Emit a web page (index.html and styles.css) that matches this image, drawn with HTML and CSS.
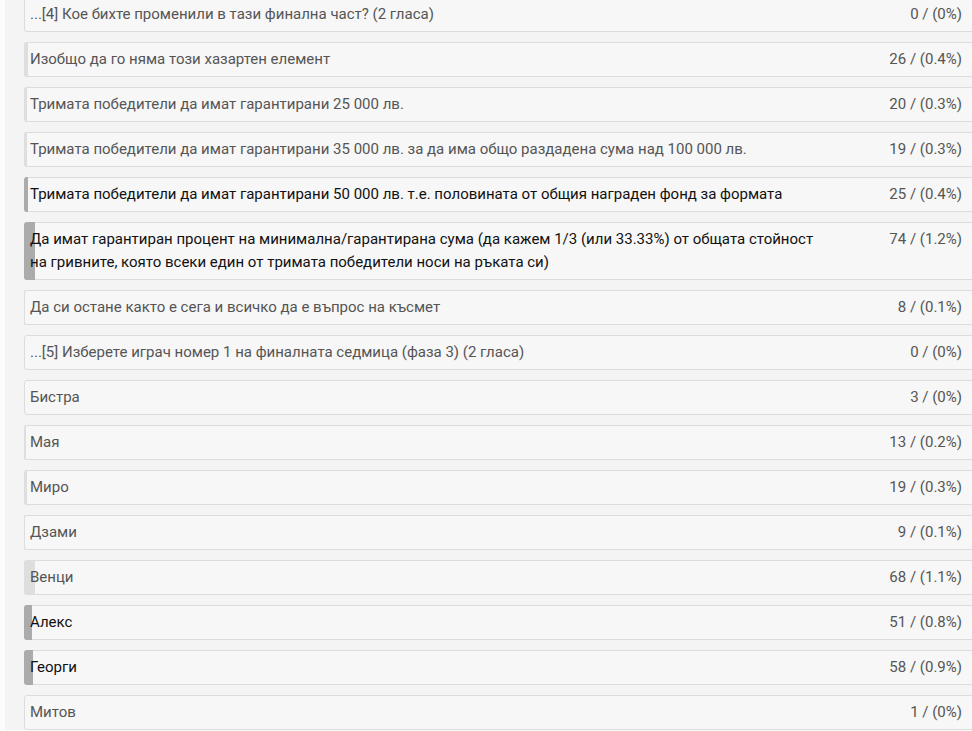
FILE: index.html
```html
<!DOCTYPE html>
<html lang="bg">
<head>
    <meta charset="UTF-8">
    <meta name="viewport" content="width=device-width, initial-scale=1.0">
    <title>Резултати от анкетата</title>
    <link rel="stylesheet" href="styles.css">
</head>
<body>
    <main class="page">
        <ul class="poll">
            <!-- въпрос 4 -->
            <li class="poll-row">
                <span class="label">...[4] Кое бихте променили в тази финална част? (2 гласа)</span>
                <span class="count">0 / (0%)</span>
            </li>
            <li class="poll-row">
                <span class="bar" style="width: 0.4%"></span>
                <span class="label">Изобщо да го няма този хазартен елемент</span>
                <span class="count">26 / (0.4%)</span>
            </li>
            <li class="poll-row">
                <span class="bar" style="width: 0.3%"></span>
                <span class="label">Тримата победители да имат гарантирани 25 000 лв.</span>
                <span class="count">20 / (0.3%)</span>
            </li>
            <li class="poll-row">
                <span class="bar" style="width: 0.3%"></span>
                <span class="label">Тримата победители да имат гарантирани 35 000 лв. за да има общо раздадена сума над 100 000 лв.</span>
                <span class="count">19 / (0.3%)</span>
            </li>
            <li class="poll-row voted">
                <span class="bar" style="width: 0.4%"></span>
                <span class="label">Тримата победители да имат гарантирани 50 000 лв. т.е. половината от общия награден фонд за формата</span>
                <span class="count">25 / (0.4%)</span>
            </li>
            <li class="poll-row voted">
                <span class="bar" style="width: 1.2%"></span>
                <span class="label">Да имат гарантиран процент на минимална/гарантирана сума (да кажем 1/3 (или 33.33%) от общата стойност на гривните, която всеки един от тримата победители носи на ръката си)</span>
                <span class="count">74 / (1.2%)</span>
            </li>
            <li class="poll-row">
                <span class="bar" style="width: 0.1%"></span>
                <span class="label">Да си остане както е сега и всичко да е въпрос на късмет</span>
                <span class="count">8 / (0.1%)</span>
            </li>

            <!-- въпрос 5 -->
            <li class="poll-row">
                <span class="label">...[5] Изберете играч номер 1 на финалната седмица (фаза 3) (2 гласа)</span>
                <span class="count">0 / (0%)</span>
            </li>
            <li class="poll-row">
                <span class="label">Бистра</span>
                <span class="count">3 / (0%)</span>
            </li>
            <li class="poll-row">
                <span class="bar" style="width: 0.2%"></span>
                <span class="label">Мая</span>
                <span class="count">13 / (0.2%)</span>
            </li>
            <li class="poll-row">
                <span class="bar" style="width: 0.3%"></span>
                <span class="label">Миро</span>
                <span class="count">19 / (0.3%)</span>
            </li>
            <li class="poll-row">
                <span class="bar" style="width: 0.1%"></span>
                <span class="label">Дзами</span>
                <span class="count">9 / (0.1%)</span>
            </li>
            <li class="poll-row">
                <span class="bar" style="width: 1.1%"></span>
                <span class="label">Венци</span>
                <span class="count">68 / (1.1%)</span>
            </li>
            <li class="poll-row voted">
                <span class="bar" style="width: 0.8%"></span>
                <span class="label">Алекс</span>
                <span class="count">51 / (0.8%)</span>
            </li>
            <li class="poll-row voted">
                <span class="bar" style="width: 0.9%"></span>
                <span class="label">Георги</span>
                <span class="count">58 / (0.9%)</span>
            </li>
            <li class="poll-row">
                <span class="bar" style="width: 0%"></span>
                <span class="label">Митов</span>
                <span class="count">1 / (0%)</span>
            </li>
        </ul>
    </main>
</body>
</html>
```

FILE: styles.css
```css
:root{
    --cor-fundo: #f4f4f4;
    --cor-linha: #f7f7f7;
    --cor-borda: #dcdcdc;
    --cor-texto: #555555;
    --cor-voto: #111111;
    --cor-barra: #dedede;
    --cor-barra-voto: #ababab;

    --font-f: 'Roboto', 'Noto Sans', sans-serif;
}

*{
    margin: 0px;
    padding: 0px;
    box-sizing: border-box;
}

html, body{
    overflow: hidden;
}

body{
    background-color: #fcfcfc;
    font-family: var(--font-f);
    font-size: 15px;
    color: var(--cor-texto);
}

.page{
    margin-left: 5px;
    margin-right: -12px;
    padding-left: 19px;
    min-height: 100vh;
    background-color: var(--cor-fundo);
}

.poll{
    list-style: none;
    display: flex;
    flex-direction: column;
    gap: 10px;
    margin-top: -3px;
}

.poll-row{
    position: relative;
    display: flex;
    align-items: flex-start;
    padding: 5px 0px;
    line-height: 23px;
    background-color: var(--cor-linha);
    border: 1px solid var(--cor-borda);
    border-radius: 3px;
}

.bar{
    position: absolute;
    top: -1px;
    bottom: -1px;
    left: -1px;
    background-color: var(--cor-barra);
    border-radius: 3px 0px 0px 3px;
}

.label{
    position: relative;
    flex: 1;
    padding-left: 5px;
    padding-right: 10px;
}

.count{
    position: relative;
    flex: 0 0 150px;
    text-align: right;
    padding-right: 21px;
}

.voted .label{
    color: var(--cor-voto);
}

.voted .bar{
    background-color: var(--cor-barra-voto);
}
```
